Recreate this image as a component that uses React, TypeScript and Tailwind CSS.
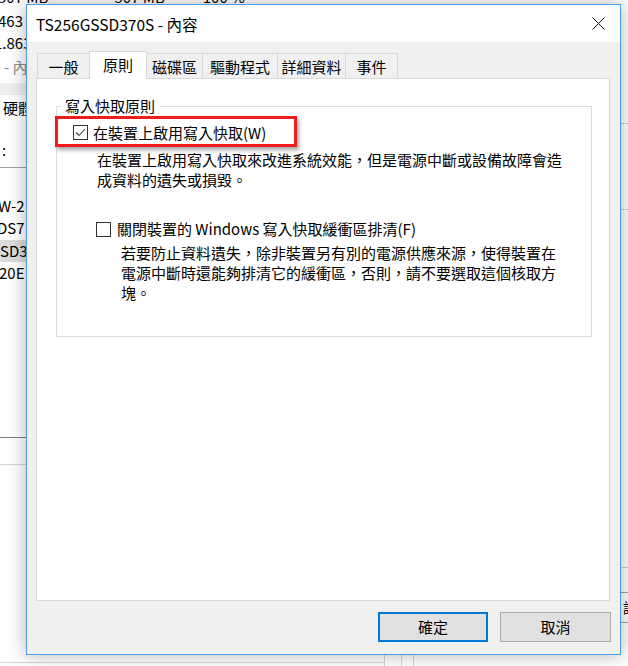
import React from "react";

const font = "font-['Noto_Sans_CJK_TC','Noto_Sans',sans-serif]";

const tabs = [
  { label: "一般", w: "w-[53px]" },
  { label: "原則", w: "w-[58px]", active: true },
  { label: "磁碟區", w: "w-[57px]" },
  { label: "驅動程式", w: "w-[76px]" },
  { label: "詳細資料", w: "w-[69px]" },
  { label: "事件", w: "w-[53px]" },
];

const Checkbox = ({ checked }: { checked?: boolean }) => (
  <span className="w-[15px] h-[15px] border border-[#333333] bg-white flex items-center justify-center shrink-0">
    {checked && (
      <svg width="11" height="11" viewBox="0 0 11 11">
        <path d="M1 5.5 L4 8.5 L10 2" fill="none" stroke="#444" strokeWidth="1.1" />
      </svg>
    )}
  </span>
);

// the Disk Management window sitting behind the dialog
const Backdrop = () => (
  <div className="absolute inset-0 flex justify-between text-[15px] leading-[20px] text-black whitespace-nowrap">
    <div className="flex flex-col w-[30px] -mt-[13px]">
      <div className="h-[24px] flex">
        <span className="-ml-[2px]">507 MB</span>
        <span className="ml-[66px]">507 MB</span>
        <span className="ml-[38px]">100 %</span>
      </div>
      <div className="h-[22px] -ml-[2px]">463 MB</div>
      <div className="h-[16px] border-b border-[#dadada] -ml-[6px]">1.863 GB</div>
      <div className="h-[34px] pt-[8px] pl-[4px] text-[#8a8a8a]">- 內容</div>
      <div className="h-[12px] bg-[#efefef]" />
      <div className="h-[45px] pt-[3px] pl-[3px]">硬體</div>
      <div className="h-[27px] pl-[2px]">:</div>
      <div className="h-px bg-[#a0a0a0]" />
      <div className="h-[28px]" />
      <div className="h-[22px] -ml-[2px]">W-2</div>
      <div className="h-[22px] -ml-[3px]">DS7</div>
      <div className="h-[22px] bg-[#dcdcdc] -ml-[1px] pl-[1px] pt-[1px]">SD3</div>
      <div className="h-[22px] -ml-[1px] pt-px">20E</div>
      <div className="h-[153px]" />
      <div className="h-px bg-[#7a7a7a]" />
      <div className="h-[26px]" />
      <div className="h-px bg-[#d4d4d4]" />
    </div>
    <div className="flex flex-col w-[8px]">
      <div className="h-[123px]" />
      <div className="h-px border-t border-dotted border-[#b0b0b0]" />
      <div className="h-[85px]" />
      <div className="h-px border-t border-dotted border-[#b0b0b0]" />
      <div className="h-[357px]" />
      <div className="h-px bg-[#d0d0d0]" />
      <div className="h-[24px]" />
      <div className="h-[31px] w-[10px] border border-[#a0a0a0] overflow-hidden text-[14px] leading-[29px] pl-[2px]">詔</div>
    </div>
    <div className="absolute left-0 bottom-0 w-[414px] h-[11px] flex">
      <div className="w-[384px] h-[4px] mt-[7px] border-t border-[#d6d6d6]" />
      <div className="w-[17px] border-l border-[#d6d6d6]" />
      <div className="w-[13px] border-x border-[#d6d6d6]" />
    </div>
  </div>
);

const App = () => (
  <div className={`relative w-[628px] h-[666px] overflow-hidden bg-white ${font}`}>
    <Backdrop />
    <div className="absolute left-[26px] top-[4px] w-[595px] h-[651px] border border-[#4a9df0] bg-[#f0f0f0] flex flex-col shadow-[0_0_18px_rgba(0,0,0,0.3)]">
      <div className="h-[37px] bg-white flex items-center justify-between pl-[9px] pr-[15px] shrink-0">
        <span className="text-[15.5px] leading-[20px] text-black">TS256GSSD370S - 內容</span>
        <svg width="13" height="13" viewBox="0 0 13 13">
          <path d="M0.5 0.5 L12.5 12.5 M12.5 0.5 L0.5 12.5" stroke="#111" strokeWidth="1" />
        </svg>
      </div>

      <div className="flex items-start ml-[11px] mt-[9px] h-[27px] relative z-10">
        {tabs.map((t) =>
          t.active ? (
            <div
              key={t.label}
              className={`${t.w} -ml-px h-[28px] bg-white border border-b-0 border-[#d9d9d9] flex items-start justify-center pt-[3px] text-[15px] leading-[20px] text-black`}
            >
              {t.label}
            </div>
          ) : (
            <div
              key={t.label}
              className={`${t.w} -ml-px mt-[2px] h-[25px] bg-[#f0f0f0] border border-b-0 border-[#d9d9d9] flex items-center justify-center pt-[2px] text-[15px] leading-[20px] text-black`}
            >
              {t.label}
            </div>
          )
        )}
      </div>

      <div className="ml-[9px] w-[574px] h-[523px] bg-white border border-[#d9d9d9] shrink-0">
        <fieldset className="ml-[19px] mt-[17px] w-[536px] border border-[#dcdcdc] pb-[33px] text-[15px] leading-[20px] text-black">
          <legend className="ml-[4px] px-[4px]">寫入快取原則</legend>
          <div className="-ml-[2px] w-[242px] h-[31px] border-[3px] border-[#ee1c1c] shadow-[2px_3px_4px_rgba(0,0,0,0.35)] flex items-center pl-[15px] pt-[2px]">
            <Checkbox checked />
            <span className="ml-[5px]">在裝置上啟用寫入快取(W)</span>
          </div>
          <div className="ml-[40px] mt-[3px]">
            在裝置上啟用寫入快取來改進系統效能，但是電源中斷或設備故障會造
            <br />
            成資料的遺失或損毀。
          </div>
          <div className="ml-[39px] mt-[29px] flex items-center">
            <Checkbox />
            <span className="ml-[6px]">關閉裝置的 Windows 寫入快取緩衝區排清(F)</span>
          </div>
          <div className="ml-[64px] mt-[4px]">
            若要防止資料遺失，除非裝置另有別的電源供應來源，使得裝置在
            <br />
            電源中斷時還能夠排清它的緩衝區，否則，請不要選取這個核取方
            <br />
            塊。
          </div>
        </fieldset>
      </div>

      <div className="flex justify-end gap-[12px] mt-[11px] pr-[9px]">
        <button className="w-[110px] h-[30px] bg-[#e1e1e1] border-2 border-[#0078d7] text-[15px] leading-[20px] text-black">
          確定
        </button>
        <button className="w-[111px] h-[30px] bg-[#e1e1e1] border border-[#adadad] text-[15px] leading-[20px] text-black">
          取消
        </button>
      </div>
    </div>
  </div>
);

export default App;
